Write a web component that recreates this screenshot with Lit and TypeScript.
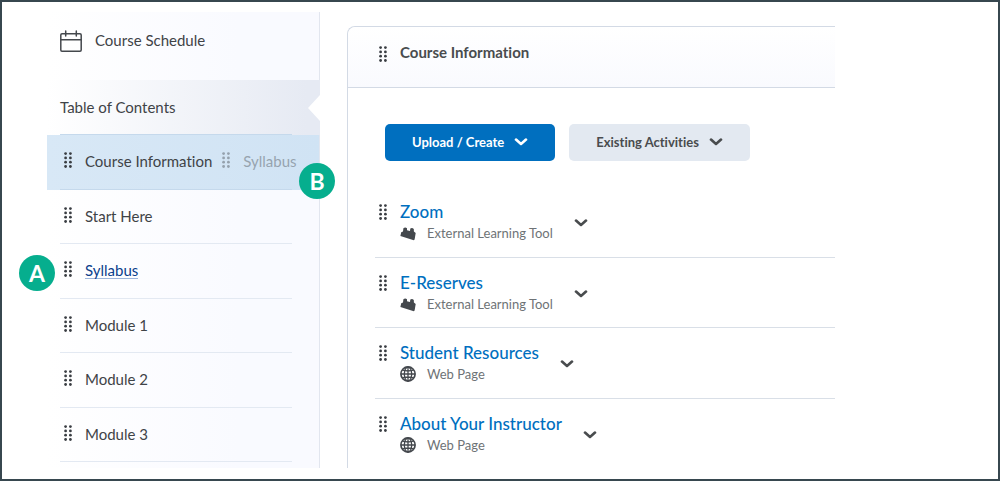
import { LitElement, html, css, svg, nothing } from "lit";
import { customElement, property } from "lit/decorators.js";

@customElement("drag-grip")
class DragGrip extends LitElement {
  static styles = css`
    :host { display: block; width: 8px; height: 16px; color: #3a3e43; }
    svg { display: block; }
  `;
  render() {
    const dots = [0, 1, 2, 3].flatMap((r) =>
      [0, 1].map((c) => svg`<circle cx=${1.6 + c * 4.8} cy=${1.6 + r * 4.3} r="1.4"></circle>`)
    );
    return html`<svg width="8" height="16" viewBox="0 0 8 16" fill="currentColor" aria-hidden="true">${dots}</svg>`;
  }
}

const chevron = html`<svg width="14" height="8" viewBox="0 0 14 8" fill="none" stroke="currentColor"
  stroke-width="2.6" stroke-linecap="round" stroke-linejoin="round" aria-hidden="true"><path d="M2 1.6 7 6l5-4.4"/></svg>`;

const calendar = html`<svg width="22" height="22" viewBox="0 0 22 22" fill="none" stroke="#44484d"
  stroke-width="1.5" stroke-linecap="round" aria-hidden="true">
  <rect x="0.8" y="3.8" width="20.4" height="17.4" rx="1.2"/><path d="M1 9.8h20M5.7 1v5M16.3 1v5"/></svg>`;

const brick = html`<svg width="16" height="16" viewBox="0 0 16 16" fill="#44484d" aria-hidden="true">
  <path d="M.4 11 1.200 7.200 3 6.400 3.400 3.200Q5.200 1.600 7 3.200V5.200L10 6 10.300 3.600Q12 2.200 13.800 3.900L13.900 6.600 15.700 8 14.600 14.600 13.800 15.200Z"/></svg>`;

const globe = html`<svg width="16" height="16" viewBox="0 0 16 16" fill="none" stroke="#44484d" stroke-width="1.3" aria-hidden="true">
  <circle cx="8" cy="8" r="7.1" stroke-width="1.7"/><ellipse cx="8" cy="8" rx="3.7" ry="7"/><path d="M8 1v14M1 8h14M2.6 4.200Q8 5.800 13.400 4.200M2.600 11.800Q8 10.200 13.400 11.800"/></svg>`;

@customElement("step-badge")
class StepBadge extends LitElement {
  @property() letter = "";
  static styles = css`
    :host {
      display: flex; align-items: center; justify-content: center;
      width: 36px; height: 36px; border-radius: 50%;
      background: #06ae8e; color: #fff; font: 700 23px/36px Lato, sans-serif;
    }
  `;
  render() {
    return html`<span>${this.letter}</span>`;
  }
}

interface Topic {
  title: string;
  kind: string;
  icon: unknown;
}

@customElement("app-root")
class AppRoot extends LitElement {
  private modules = ["Course Information", "Start Here", "Syllabus", "Module 1", "Module 2", "Module 3"];

  private topics: Topic[] = [
    { title: "Zoom", kind: "External Learning Tool", icon: brick },
    { title: "E-Reserves", kind: "External Learning Tool", icon: brick },
    { title: "Student Resources", kind: "Web Page", icon: globe },
    { title: "About Your Instructor", kind: "Web Page", icon: globe },
  ];

  static styles = css`
    :host {
      display: block;
      font: 400 15px/20px Lato, sans-serif;
      font-variant-ligatures: none;
      color: #494c4e;
    }
    * { box-sizing: border-box; }
    ul { list-style: none; margin: 0; padding: 0; }
    a { color: inherit; text-decoration: none; }
    h2 { font: inherit; font-variant-ligatures: none; margin: 0; }
    .frame {
      display: grid;
      grid-template-columns: 273px minmax(0, 1fr);
      column-gap: 27px;
      min-height: 100vh;
      padding: 10px 163px 11px 45px;
      border: 2px solid #37474f;
      background: #fff;
    }
    .sidebar {
      display: flex;
      flex-direction: column;
      border-right: 1px solid #e2e6ef;
      background: linear-gradient(90deg, #fff, #f9faff 70%);
      color: #3f4347;
    }
    .schedule {
      display: flex;
      gap: 13px;
      height: 68px;
      padding: 18px 13px;
    }
    .contents {
      position: relative;
      height: 55px;
      margin-right: -1px;
      padding: 17px 13px;
      background: linear-gradient(90deg, #fff, #e6eaf3 95%);
    }
    .contents::after {
      content: "";
      position: absolute;
      right: 0;
      top: 15px;
      width: 12px;
      height: 26px;
      background: #fff;
      clip-path: polygon(0 50%, 100% 0, 100% 100%);
    }
    .modules {
      flex: 1;
      display: grid;
      grid-template-columns: minmax(0, 1fr);
      grid-auto-rows: 1fr;
      padding-bottom: 6px;
    }
    .module {
      position: relative;
      display: flex;
      padding: 0 27px 0 13px;
    }
    .module-body {
      flex: 1;
      min-width: 0;
      display: flex;
      gap: 10px;
      padding: 16px 0 0 4px;
      border-bottom: 1px solid #e3e9f2;
      white-space: nowrap;
    }
    .module drag-grip { margin: 1px 3px 0 0; }
    .target { background: linear-gradient(90deg, #d8e8f6, #d0e3f4); }
    .target .module-body { border-color: #c5d9ec; box-shadow: 0 -1px #c5d9ec; }
    .ghost { display: flex; gap: 10px; opacity: 0.4; }
    .dragged { color: #0b3f8c; height: 19px; border-bottom: 1px solid #9db6dc; }
    .badge-a { position: absolute; left: -28px; top: 11px; }
    .badge-b { position: absolute; right: -16px; top: 28px; z-index: 1; }
    .panel {
      display: flex;
      flex-direction: column;
      margin-top: 14px;
      border: solid #d3dae5;
      border-width: 1px 0 0 1px;
      border-radius: 8px 0 0 0;
    }
    .panel-head {
      display: flex;
      gap: 13px;
      height: 61px;
      padding: 15px 31px;
      border-bottom: 1px solid #d3dae5;
      border-radius: 8px 0 0 0;
      background: linear-gradient(#fff, #f9fafe);
      font-weight: 700;
    }
    .panel-head drag-grip { margin-top: 4px; }
    .actions { display: flex; gap: 14px; padding: 36px 37px 26px; }
    .action {
      display: flex;
      align-items: center;
      gap: 10px;
      height: 37px;
      padding: 0 27px 2px;
      border: 0;
      border-radius: 5px;
      background: #e3e9f1;
      color: #494c4e;
      font: 700 13px/20px Lato, sans-serif;
      font-variant-ligatures: none;
      white-space: nowrap;
    }
    .primary { background: #006fbf; color: #fff; }
    .topics {
      flex: 1;
      display: grid;
      grid-template-rows: 71px 70px 71px auto;
      padding-left: 27px;
    }
    .topic {
      display: flex;
      gap: 13px;
      padding: 13px 0 0 4px;
      border-bottom: 1px solid #d9dfe7;
    }
    .topic:last-child { border: 0; }
    .topic drag-grip { margin-top: 4px; }
    .title { display: block; color: #006fbf; font-size: 17px; font-weight: 500; line-height: 23px; }
    .kind {
      display: flex;
      align-items: center;
      gap: 11px;
      font-size: 13px;
      color: #6e7376;
    }
    .more {
      display: flex;
      align-self: flex-start;
      margin: 15px 0 0 8px;
      padding: 4px 0;
      border: 0;
      background: none;
      color: #494c4e;
    }
  `;

  private renderModule(name: string, i: number) {
    const isTarget = i === 0;
    const isDragged = name === "Syllabus";
    return html`<li class="module ${isTarget ? "target" : ""}">
      <div class="module-body">
        <drag-grip></drag-grip>
        <a href="#" class=${isDragged ? "dragged" : "name"}>${name}</a>
        ${isTarget ? html`<span class="ghost"><drag-grip></drag-grip><span>Syllabus</span></span>` : nothing}
      </div>
      ${isTarget ? html`<step-badge class="badge-b" letter="B"></step-badge>` : nothing}
      ${isDragged ? html`<step-badge class="badge-a" letter="A"></step-badge>` : nothing}
    </li>`;
  }

  render() {
    return html`<div class="frame">
      <nav class="sidebar" aria-label="Course content">
        <a href="#" class="schedule">${calendar}<span>Course Schedule</span></a>
        <a href="#" class="contents">Table of Contents</a>
        <ul class="modules">${this.modules.map((m, i) => this.renderModule(m, i))}</ul>
      </nav>
      <main class="panel">
        <header class="panel-head"><drag-grip></drag-grip><h2>Course Information</h2></header>
        <div class="actions">
          <button class="action primary">Upload / Create ${chevron}</button>
          <button class="action">Existing Activities ${chevron}</button>
        </div>
        <ul class="topics">
          ${this.topics.map(
            (t) => html`<li class="topic">
              <drag-grip></drag-grip>
              <div>
                <a href="#" class="title">${t.title}</a>
                <span class="kind">${t.icon}<span>${t.kind}</span></span>
              </div>
              <button class="more" aria-label="Actions for ${t.title}">${chevron}</button>
            </li>`
          )}
        </ul>
      </main>
    </div>`;
  }
}
